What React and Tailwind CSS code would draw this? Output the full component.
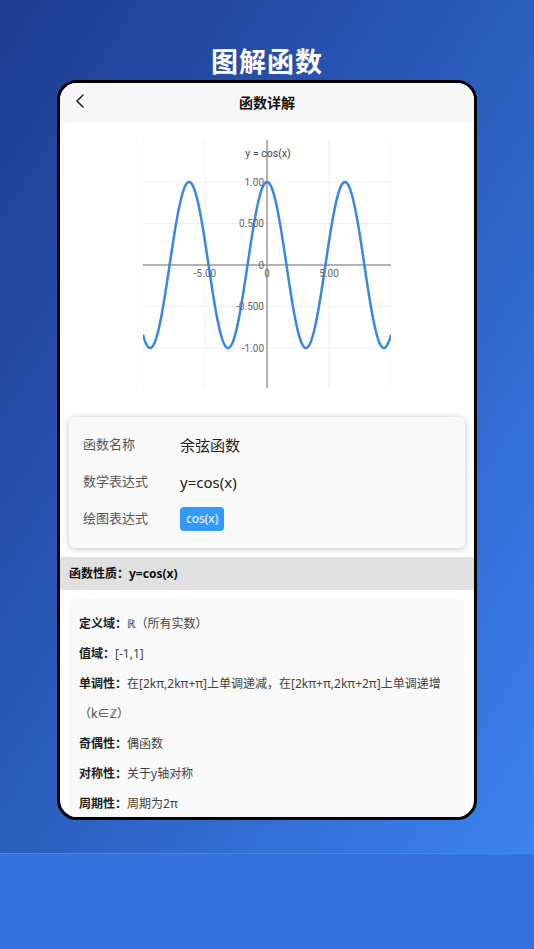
import { ChevronLeft } from "lucide-react";

const W = 248;
const H = 248;
const X0 = 124;
const Y0 = 125;
const SX = 12.4;
const SY = 83;

function cosPath() {
    let d = "";
    for (let i = 0; i <= 400; i++) {
        const x = -10 + (20 * i) / 400;
        const px = X0 + x * SX;
        const py = Y0 - Math.cos(x) * SY;
        d += (i === 0 ? "M" : "L") + px.toFixed(2) + " " + py.toFixed(2) + " ";
    }
    return d;
}

function Chart() {
    const hLines = [1, 0.5, -0.5, -1];
    const vLines = [-10, -5, 5, 10];
    const yLabels = [
        { v: 1, t: "1.00" },
        { v: 0.5, t: "0.500" },
        { v: 0, t: "0" },
        { v: -0.5, t: "-0.500" },
        { v: -1, t: "-1.00" },
    ];
    const xLabels = [
        { v: -5, t: "-5.00" },
        { v: 0, t: "0" },
        { v: 5, t: "5.00" },
    ];
    return (
        <svg width={W} height={H} viewBox={`0 0 ${W} ${H}`} className="block">
            {hLines.map((v) => (
                <line key={"h" + v} x1="0" x2={W} y1={Y0 - v * SY} y2={Y0 - v * SY} stroke="#efefef" strokeWidth="1" />
            ))}
            {vLines.map((v) => (
                <line key={"v" + v} y1="0" y2={H} x1={X0 + v * SX} x2={X0 + v * SX} stroke="#efefef" strokeWidth="1" />
            ))}
            <line x1="0" x2={W} y1={Y0} y2={Y0} stroke="#9a9a9a" strokeWidth="1.5" />
            <line x1={X0} x2={X0} y1="0" y2={H} stroke="#9a9a9a" strokeWidth="1.5" />
            <path d={cosPath()} fill="none" stroke="#3a87e0" strokeWidth="2.5" />
            {yLabels.map((l) => (
                <text key={"yl" + l.t} x={X0 - 3} y={Y0 - l.v * SY + 3.5} textAnchor="end" fontSize="10" fill="#666" fontFamily="Roboto, sans-serif">
                    {l.t}
                </text>
            ))}
            {xLabels.map((l) => (
                <text key={"xl" + l.t} x={X0 + l.v * SX} y={Y0 + 12} textAnchor="middle" fontSize="10" fill="#666" fontFamily="Roboto, sans-serif">
                    {l.t}
                </text>
            ))}
            <text x={X0 + 1} y="17" textAnchor="middle" fontSize="10.5" fill="#444" fontFamily="Roboto, sans-serif">
                y = cos(x)
            </text>
        </svg>
    );
}

export default function App() {
    const props = [
        { k: "定义域：", v: "ℝ（所有实数）" },
        { k: "值域：", v: "[-1,1]" },
        { k: "单调性：", v: "在[2kπ,2kπ+π]上单调递减，在[2kπ+π,2kπ+2π]上单调递增（k∈ℤ）" },
        { k: "奇偶性：", v: "偶函数" },
        { k: "对称性：", v: "关于y轴对称" },
        { k: "周期性：", v: "周期为2π" },
    ];

    return (
        <div
            className="w-[534px] h-[949px] flex flex-col overflow-hidden"
            style={{ fontFamily: "'Noto Sans', 'Noto Sans CJK SC', sans-serif" }}
        >
            <div className="h-[853px] bg-gradient-to-br from-[#1d3c8f] to-[#3b82f0] flex flex-col items-center">
                <h1 className="pt-[44px] h-[80px] leading-[36px] text-[27px] font-bold text-white tracking-[1px]">
                    图解函数
                </h1>
                <div className="w-[420px] h-[740px] border-[3px] border-black rounded-[20px] bg-white overflow-hidden flex flex-col">
                    {/* header */}
                    <div className="h-[39px] shrink-0 bg-[#f7f7f7] flex items-center relative">
                        <ChevronLeft className="absolute left-[8px] top-[6px] w-[24px] h-[24px] text-[#222]" strokeWidth={1.5} />
                        <div className="flex-1 text-center text-[14px] font-bold text-[#111]">函数详解</div>
                    </div>

                    {/* chart */}
                    <div className="shrink-0 flex justify-center pt-[18px] pb-[29px]">
                        <Chart />
                    </div>

                    {/* info card */}
                    <div className="shrink-0 mx-[9px] bg-[#f9f9f9] rounded-[6px] shadow-[0_1px_6px_rgba(0,0,0,0.25)] px-[14px] pt-[16px] pb-[17px] flex flex-col gap-[13px]">
                        <div className="flex items-center h-[24px]">
                            <span className="w-[97px] text-[13px] text-[#555]">函数名称</span>
                            <span className="text-[15px] text-[#222]">余弦函数</span>
                        </div>
                        <div className="flex items-center h-[24px]">
                            <span className="w-[97px] text-[13px] text-[#555]">数学表达式</span>
                            <span className="text-[15px] text-[#222]">y=cos(x)</span>
                        </div>
                        <div className="flex items-center h-[24px]">
                            <span className="w-[97px] text-[13px] text-[#555]">绘图表达式</span>
                            <span className="h-[24px] px-[6px] flex items-center rounded-[4px] bg-[#3399ff] text-white text-[12px]">
                                cos(x)
                            </span>
                        </div>
                    </div>

                    {/* properties header */}
                    <div className="shrink-0 mt-[9px] h-[33px] bg-[#e0e0e0] flex items-center px-[9px] text-[12px] font-bold text-[#111]">
                        函数性质：y=cos(x)
                    </div>

                    {/* properties */}
                    <div className="shrink-0 mx-[9px] mt-[9px] bg-[#f9f9f9] rounded-[6px] px-[10px] pt-[10px] pb-[10px] text-[12px] leading-[30px] text-[#444]">
                        {props.map((p) => (
                            <div key={p.k}>
                                <span className="font-bold text-[#222]">{p.k}</span>
                                <span>{p.v}</span>
                            </div>
                        ))}
                    </div>
                </div>
            </div>
            <div className="flex-1 bg-[#3571de] border-t border-[#4a86e8]" />
        </div>
    );
}
